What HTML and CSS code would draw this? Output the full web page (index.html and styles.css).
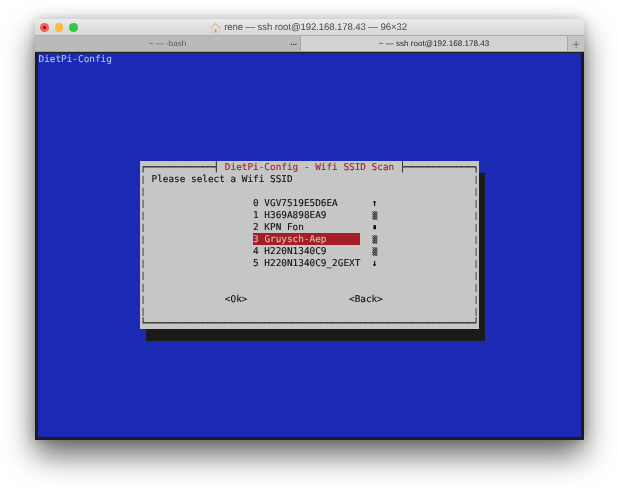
FILE: index.html
```html
<!DOCTYPE html>
<html lang="en">
<head>
<meta charset="utf-8">
<title>rene — ssh root@192.168.178.43 — 96×32</title>
<link rel="stylesheet" href="styles.css">
</head>
<body>
<div class="window">
  <div class="titlebar">
    <div class="lights">
      <span class="light red"></span>
      <span class="light yellow"></span>
      <span class="light green"></span>
    </div>
    <div class="title">
      <svg class="home" viewBox="0 0 12 12" width="11" height="11"><path d="M6 1 L11.5 6.2 L10 6.2 L10 11 L2 11 L2 6.2 L.5 6.2 Z" fill="#e6e2dc" stroke="#c4bab0" stroke-width=".6"/><path d="M6 1 L11.5 6.2 L10 6.2 L6 2.6 L2 6.2 L.5 6.2 Z" fill="#dcb9a0"/><rect x="5" y="7.5" width="2" height="3.5" fill="#b5a08c"/></svg>
      <span>rene — ssh root@192.168.178.43 — 96×32</span>
    </div>
  </div>
  <div class="tabs">
    <div class="tab inactive"><span class="soft">~ — -bash</span><span class="more soft">...</span></div>
    <div class="tab active"><span class="soft">~ — ssh root@192.168.178.43</span></div>
    <div class="plus">+</div>
  </div>
  <div class="terminal">
    <pre class="screen">DietPi-Config</pre>
    <pre class="dialog">┌────────────┤ <span class="dlg-title">DietPi-Config - Wifi SSID Scan</span> ├────────────┐
<span class="v">|</span> Please select a Wifi SSID                                <span class="v">|</span>
<span class="v">|</span>                                                          <span class="v">|</span>
<span class="v">|</span>                   0 VGV7519E5D6EA      <span class="arrow">↑</span>                 <span class="v">|</span>
<span class="v">|</span>                   1 H369A898EA9        <span class="thumb">▒</span>                 <span class="v">|</span>
<span class="v">|</span>                   2 KPN Fon            <span class="knob">▪</span>                 <span class="v">|</span>
<span class="v">|</span>                   <span class="sel">3 Gruysch-Aep      </span>  <span class="thumb">▒</span>                 <span class="v">|</span>
<span class="v">|</span>                   4 H220N1340C9        <span class="thumb">▒</span>                 <span class="v">|</span>
<span class="v">|</span>                   5 H220N1340C9_2GEXT  <span class="arrow">↓</span>                 <span class="v">|</span>
<span class="v">|</span>                                                          <span class="v">|</span>
<span class="v">|</span>                                                          <span class="v">|</span>
<span class="v">|</span>              &lt;Ok&gt;                  &lt;Back&gt;                <span class="v">|</span>
<span class="v">|</span>                                                          <span class="v">|</span>
└──────────────────────────────────────────────────────────┘</pre>
  </div>
</div>
</body>
</html>
```
FILE: styles.css
```css
* { box-sizing: border-box; }
html, body { margin: 0; height: 100%; background: #fff; overflow: hidden; }
body { padding: 19px 34px 0 35px; }

.window {
  width: 549px;
  height: 421px;
  display: flex;
  flex-direction: column;
  border-radius: 5px 5px 0 0;
  box-shadow: 0 15px 30px rgba(0, 0, 0, .6), 0 0 12px rgba(0, 0, 0, .2);
  font-family: "Liberation Sans", Arial, sans-serif;
  text-rendering: geometricPrecision;
}

.titlebar {
  position: relative;
  height: 16px;
  flex: none;
  display: flex;
  align-items: center;
  justify-content: center;
  background: linear-gradient(#ebebeb, #d6d6d6);
  border-radius: 5px 5px 0 0;
}
.lights {
  position: absolute;
  left: 5px;
  top: 4px;
  display: flex;
  gap: 6px;
}
.light {
  width: 8.5px;
  height: 8.5px;
  border-radius: 50%;
  display: block;
}
.red { background: radial-gradient(circle, #5a1010 0 1.1px, #fc5b57 1.6px); }
.yellow { background: #fdbc40; }
.green { background: #34c84a; }

.title {
  display: flex;
  align-items: center;
  gap: 3px;
  font-size: 9.6px;
  letter-spacing: -.1px;
  color: #4c4c4c;
  margin-top: 1px;
  margin-left: -2px;
  filter: blur(.2px);
}
.home { flex: none; }
.soft { filter: blur(.2px); }

.tabs {
  height: 17px;
  flex: none;
  display: flex;
  font-size: 8.1px;
  border-top: 1px solid #adadad;
  border-bottom: 1px solid #a2a2a2;
}
.tab {
  width: 266px;
  display: flex;
  align-items: center;
  justify-content: center;
  position: relative;
}
.inactive { background: #bababa; color: #5c5c5c; border-right: 1px solid #a8a8a8; }
.active { background: #d3d3d3; color: #262626; }
.more {
  position: absolute;
  right: 3px;
  top: 2px;
  color: #333;
  font-weight: bold;
}
.plus {
  flex: 1;
  display: flex;
  align-items: center;
  justify-content: center;
  background: #c4c4c4;
  border-left: 1px solid #a8a8a8;
  color: #7c7c7c;
  font-size: 14px;
  line-height: 1;
}

.terminal {
  position: relative;
  flex: 1;
  background: #1b2ab2;
  border: solid #1c1c1c;
  border-width: 1px 3px 3px 3px;
  font-family: "DejaVu Sans Mono", monospace;
  font-size: 9.4px;
  line-height: 12px;
  text-rendering: geometricPrecision;
  -webkit-text-stroke: .1px currentColor;
}
.screen, .dialog {
  margin: 0;
  font: inherit;
  line-height: 12px;
  filter: blur(.25px);
}
.screen {
  padding: 1px 0 0 .5px;
  color: #b9c0e6;
}
.dialog {
  position: absolute;
  left: 102.2px;
  top: 108px;
  width: 339px;
  height: 168px;
  padding-top: 1px;
  background: #c6c6c6;
  color: #0c0c0c;
  box-shadow: 6px 12px 0 #1a1a1a;
}
.dlg-title { color: #a51d26; }
.sel {
  display: inline-block;
  height: 12px;
  margin-top: -1px;
  padding-top: 1px;
  background: #a51d26;
  color: #c6c6c6;
  vertical-align: top;
}
.v {
  display: inline-block;
  transform: scaleY(.85);
  color: #3a3a3a;
}
.thumb, .knob {
  display: inline-block;
  transform: scale(.85, .78);
}
.knob { transform: scale(.7, 1.1); }
.arrow { font-weight: bold; }
```
